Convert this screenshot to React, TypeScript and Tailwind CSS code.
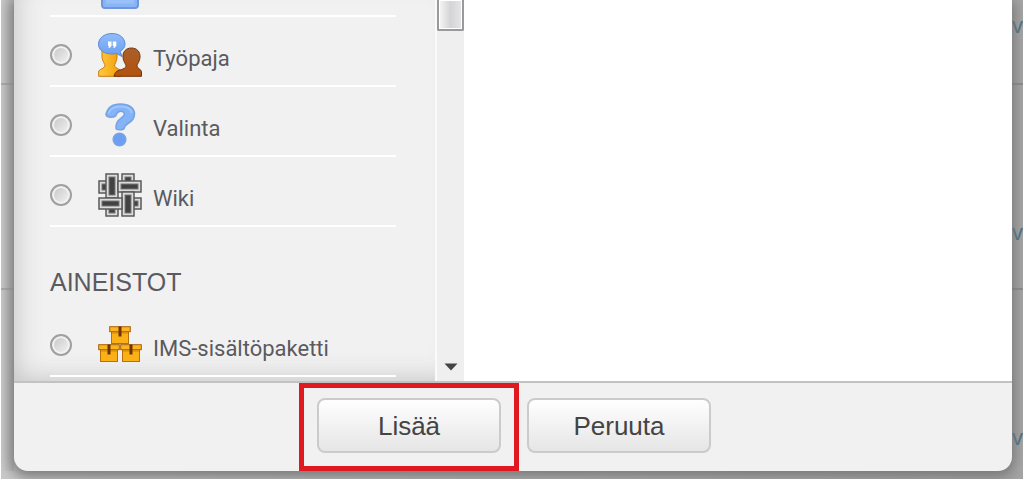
import type { ReactNode } from "react";

function DatabaseIcon() {
  return (
    <svg viewBox="0 0 44 44" className="h-11 w-11 shrink-0" aria-hidden="true">
      <rect x="4" y="2" width="36" height="41" rx="3" fill="#8ab4f5" stroke="#6c97df" strokeWidth="2" />
      <path d="M8 36h28" stroke="#98c1fa" strokeWidth="5" />
    </svg>
  );
}

function WorkshopIcon() {
  return (
    <svg viewBox="0 0 44 44" className="h-11 w-11 shrink-0" aria-hidden="true">
      <defs>
        <linearGradient id="gold" x1="0" x2="1">
          <stop offset="0" stopColor="#ffcb3d" />
          <stop offset="1" stopColor="#f29a08" />
        </linearGradient>
        <linearGradient id="brown" x1="0" y1="0" x2="0" y2="1">
          <stop offset="0" stopColor="#a8602a" />
          <stop offset="1" stopColor="#b4520e" />
        </linearGradient>
        <linearGradient id="bubble" x1="0" y1="0" x2="0" y2="1">
          <stop offset="0" stopColor="#91bdfb" />
          <stop offset="1" stopColor="#6a9df0" />
        </linearGradient>
      </defs>
      <path
        d="M.7 43.3V38c1.500-2 5.500-2.500 6.300-5 .3-1.800-2.500-4-3-9V14h15v11c-.5 4-2.500 6-2.500 8 1 2.500 5 2.500 6.500 5v5.300Z"
        fill="url(#gold)"
        stroke="#c87a10"
        strokeWidth="1"
      />
      <path
        d="M16 43.300c.5-3 2-5 5-6 4-1.300 7-2 7-4.300 0-2-2.700-4-3-9-.3-5.500 3-9 8.500-9s8.800 4 8.500 9c-.3 5-3 7-3 9 0 2.500 4 3 4.500 5.500v4.800Z"
        fill="url(#brown)"
        stroke="#70340c"
        strokeWidth="1"
      />
      <path
        d="M14 .5C6.500.5.5 5 .5 11.300S6.500 21 14 21c1.500 0 3-.2 4.300-.5L24 23.500l-1.800-5.200c3-1.800 4.800-4 4.800-7C27 5 21.500.5 14 .5Z"
        fill="url(#bubble)"
        stroke="#5b8ad5"
        strokeWidth="1"
      />
      <path d="M10 8.500h3.500v4.500l-2 2h-1l.5-2H10Zm4.800 0h3.500v4.500l-2 2h-1l.5-2h-1Z" fill="#fff" />
    </svg>
  );
}

function ChoiceIcon() {
  return (
    <svg viewBox="0 0 44 44" className="h-11 w-11 shrink-0" aria-hidden="true">
      <path
        d="M8 11.500C9.500 4.500 15 1 22.500 1 30.500 1 36.500 4.500 36.500 11c0 5-3 7.500-6.500 9.500-2.800 1.700-3.500 2.500-3.800 4.700-.5 2-8 2.200-8.200 0-.4-5 1.500-7.700 4.500-9.700 2.700-1.800 4.500-3 3.800-5.200-1-3-6.300-3-8 1.200-.8 3.500-10.300 3.500-10.300 0Z"
        fill="#84b3f7"
        stroke="#76a1e2"
        strokeWidth="1.500"
      />
      <path d="M10.500 10.500C12 6 16 3.500 22 3.500s11 2 11.800 6.500" fill="none" stroke="#9dc6fc" strokeWidth="2" />
      <circle cx="21.500" cy="36.500" r="6.300" fill="#6c9ff3" stroke="#7ba3e2" strokeWidth="1.500" />
    </svg>
  );
}

function Strap({ x, y, w, h }: { x: number; y: number; w: number; h: number }) {
  return (
    <>
      <rect x={x} y={y} width={w} height={h} fill="#dcdcdc" stroke="#5a5a5a" strokeWidth="1.500" />
      <rect x={x + 3} y={y + 3} width={w - 6} height={h - 6} fill="#424242" stroke="#777" strokeWidth="1" />
    </>
  );
}

function WikiIcon() {
  return (
    <svg viewBox="0 0 44 44" className="h-11 w-11 shrink-0" aria-hidden="true">
      <Strap x={1} y={8} w={18} h={12} />
      <Strap x={24} y={1} w={12} h={18} />
      <Strap x={25} y={25} w={18} h={11} />
      <Strap x={8} y={25} w={12} h={18} />
      <Strap x={8} y={1} w={12} h={24} />
      <Strap x={20} y={8} w={23} h={11} />
      <Strap x={24} y={19} w={12} h={24} />
      <Strap x={1} y={25} w={23} h={11} />
    </svg>
  );
}

function Crate({ x, y }: { x: number; y: number }) {
  return (
    <g transform={`translate(${x} ${y})`}>
      <rect x="2.500" y="5" width="17" height="12.500" fill="#fbb116" stroke="#b8700a" />
      <rect x=".7" y=".7" width="20.600" height="5" fill="#fdb51b" stroke="#a8620a" />
      <path d="M3 7h16" stroke="#d18508" strokeWidth="1" />
      <rect x="9.500" y=".5" width="3" height="10" fill="#6b350c" />
    </g>
  );
}

function PackageIcon() {
  return (
    <svg viewBox="0 0 44 44" className="h-11 w-11 shrink-0" aria-hidden="true">
      <Crate x={11} y={3} />
      <Crate x={0} y={21} />
      <Crate x={22} y={21} />
    </svg>
  );
}

function Option({ id, label, icon }: { id: string; label: string; icon: ReactNode }) {
  return (
    <li className="flex h-[70px] items-center border-b-2 border-white pt-2">
      <input
        type="radio"
        name="activity"
        id={id}
        className="h-[22px] w-[22px] shrink-0 appearance-none rounded-full border-2 border-[#a0a0a0] bg-linear-to-br from-[#c4c4c4] to-[#f6f6f6] shadow-[inset_0_0_0_2px_#f2f2f2]"
      />
      <label htmlFor={id} className="ml-[26px] flex items-center gap-[11px] font-[Roboto,sans-serif] text-[22px] leading-7 text-[#5a5a5f]">
        {icon}
        <span className="pt-2">{label}</span>
      </label>
    </li>
  );
}

const activities = [
  { id: "workshop", label: "Työpaja", icon: <WorkshopIcon /> },
  { id: "choice", label: "Valinta", icon: <ChoiceIcon /> },
  { id: "wiki", label: "Wiki", icon: <WikiIcon /> },
];

const buttonClass =
  "h-[55px] w-[184px] rounded-lg border-2 border-[#cbcbcd] bg-linear-to-b from-white to-[#e5e5e5] text-[26px] leading-8 text-[#444]";

export default function App() {
  return (
    <div className="overflow-hidden bg-white px-px pb-0.5 font-['Liberation_Sans',Arial,sans-serif]">
      <div className="flex overflow-hidden bg-linear-to-r from-[#c9c9c9] to-[#a5a5a5] pb-2">
        {/* page behind the dialog, left edge */}
        <div className="flex w-[13px] shrink-0 flex-col bg-linear-to-r from-[#cbcbcb] to-[#b5b5b5]">
          <div className="h-[85px] border-b-2 border-[#aaa]" />
          <div className="h-[205px] border-b-2 border-[#aaa]" />
        </div>

        <main className="relative z-10 min-w-0 flex-1 overflow-hidden rounded-b-[14px] bg-[#f1f1f1] shadow-[0_3px_14px_3px_#777]">
          <div className="flex bg-white">
            <section className="w-[421px] shrink-0 bg-[#f1f1f1] pr-[39px] pb-1 pl-9 shadow-[inset_12px_-12px_26px_-10px_#c4c4c4]">
              <div className="flex h-[17px] items-end overflow-hidden border-b-2 border-white pb-[6px] pl-12">
                <DatabaseIcon />
              </div>
              <ul>
                {activities.map((a) => (
                  <Option key={a.id} {...a} />
                ))}
              </ul>
              <h2 className="h-20 pt-10 text-[25px] leading-[30px] text-[#5a5a5f]">AINEISTOT</h2>
              <ul>
                <Option id="ims" label="IMS-sisältöpaketti" icon={<PackageIcon />} />
              </ul>
            </section>

            {/* scrollbar */}
            <div className="flex w-[29px] shrink-0 flex-col items-center justify-between border-l-2 border-[#fafafa] bg-[#efefef]">
              <div className="h-[31px] w-[27px] rounded-b-xs border-2 border-t-0 border-[#999] bg-linear-to-r from-[#f7f7f7] via-[#d4d4d8] to-[#e6e6e8] shadow-[inset_0_0_0_1px_#fff]" />
              <svg viewBox="0 0 14 8" className="mb-[10px] h-2 w-3.5" aria-hidden="true">
                <path d="M.5.500h13L7 7.500Z" fill="#444" />
              </svg>
            </div>
          </div>

          <footer className="flex justify-center gap-[26px] border-t-2 border-[#c2c2c2] pt-[15px] pb-[18px] pl-0.5">
            <div className="relative">
              <button type="button" className={buttonClass}>
                Lisää
              </button>
              <span className="pointer-events-none absolute -inset-x-[18px] -top-[15px] -bottom-[18px] border-[5px] border-[#e0181f]" />
            </div>
            <button type="button" className={buttonClass}>
              Peruuta
            </button>
          </footer>
        </main>

        {/* page behind the dialog, right edge */}
        <div className="flex w-[11px] shrink-0 flex-col overflow-hidden bg-[#a8a8a8] text-[22px] leading-7 text-[#3f7187]">
          <a href="#" className="h-[85px] border-b-2 border-[#8d8d8d] pt-3">
            v
          </a>
          <a href="#" className="h-[205px] border-b-2 border-[#8d8d8d] pt-[134px]">
            v
          </a>
          <a href="#" className="pt-[134px]">
            v
          </a>
        </div>
      </div>
    </div>
  );
}
